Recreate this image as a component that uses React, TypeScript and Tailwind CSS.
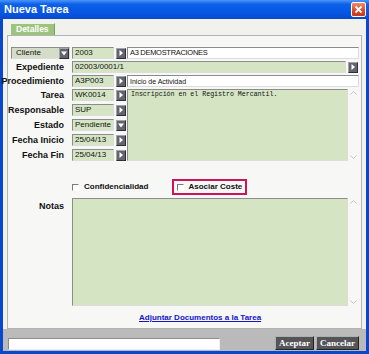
import React from "react";

// small square button with white triangle (arrow / dropdown)
function ArrowBtn({ down = false }: { down?: boolean }) {
  return (
    <div className="w-[10px] h-[11px] shrink-0 flex items-center justify-center bg-[#64646e] border border-t-[#a4a4ac] border-l-[#a4a4ac] border-b-[#2e2e34] border-r-[#2e2e34]">
      {down ? (
        <svg width="6" height="5" viewBox="0 0 6 5">
          <path d="M0 0.5h6L3 4.5z" fill="#fff" />
        </svg>
      ) : (
        <svg width="4" height="6" viewBox="0 0 4 6">
          <path d="M0.5 0v6L4 3z" fill="#fff" />
        </svg>
      )}
    </div>
  );
}

function Field({
  children,
  className = "",
}: {
  children?: React.ReactNode;
  className?: string;
}) {
  return (
    <div
      className={`h-[12px] flex items-center px-[2px] border border-t-[#8c8c8c] border-l-[#8c8c8c] border-b-[#dcdcdc] border-r-[#dcdcdc] leading-none text-[#111] overflow-hidden whitespace-nowrap ${className}`}
    >
      {children}
    </div>
  );
}

function Label({ text }: { text: string }) {
  return (
    <div className="w-[62px] shrink-0 pr-[8px] flex justify-end text-[9px] font-bold leading-none text-[#111] whitespace-nowrap">
      <span>{text}</span>
    </div>
  );
}

function Scroll({ h }: { h: string }) {
  return (
    <div className={`w-[11px] ${h} flex flex-col justify-between items-center py-[2px]`}>
      <svg width="7" height="4" viewBox="0 0 7 4">
        <path d="M0.5 3.5L3.5 0.5L6.5 3.5" stroke="#c4c4c4" fill="none" />
      </svg>
      <svg width="7" height="4" viewBox="0 0 7 4">
        <path d="M0.5 0.5L3.5 3.5L6.5 0.5" stroke="#c4c4c4" fill="none" />
      </svg>
    </div>
  );
}

function Checkbox() {
  return (
    <div className="w-[7px] h-[7px] shrink-0 bg-white border border-t-[#7a7a7a] border-l-[#7a7a7a] border-b-white border-r-white" />
  );
}

function SmallRow({ label, value, down = false }: { label: string; value: string; down?: boolean }) {
  return (
    <div className="flex items-center h-[12px]">
      <Label text={label} />
      <Field className="w-[42px] bg-[#d5e5c4] text-[8px]">{value}</Field>
      <div className="ml-[2px]">
        <ArrowBtn down={down} />
      </div>
    </div>
  );
}

export default function App() {
  return (
    <div
      className="w-[369px] h-[354px] flex flex-col bg-[#0a47cf] overflow-hidden"
      style={{ fontFamily: '"Liberation Sans", Arial, sans-serif' }}
    >
      {/* title bar */}
      <div className="h-[19px] shrink-0 flex items-center justify-between pl-[4px] pr-[3px] bg-[linear-gradient(to_bottom,#4a95f8_0%,#0c60ea_22%,#0656e2_70%,#0a48cc_100%)]">
        <span className="text-[11px] font-bold text-white leading-none">Nueva Tarea</span>
        <div className="w-[15px] h-[15px] rounded-[2px] border border-white bg-[linear-gradient(to_bottom,#f08a6a,#d9482a_60%,#c23a1c)] flex items-center justify-center">
          <svg width="9" height="9" viewBox="0 0 9 9">
            <path d="M1.5 1.5L7.5 7.5M7.5 1.5L1.5 7.5" stroke="#fff" strokeWidth="1.8" />
          </svg>
        </div>
      </div>

      {/* body */}
      <div className="flex-1 min-h-0 flex flex-col mx-[3px] mb-[3px] bg-[#f1f1ee]">
        {/* tab */}
        <div className="pt-[4px] px-[5px] flex">
          <div className="ml-[2px] h-[12px] px-[5px] flex items-center bg-[#9cc47e] border border-b-0 border-t-[#eef5e8] border-l-[#eef5e8] border-r-[#7aa060] text-[8.5px] font-bold text-white leading-none">
            Detalles
          </div>
        </div>

        {/* panel */}
        <div className="flex-1 min-h-0 mx-[4px] border border-[#b4b4b4] bg-[#f7f7f5] flex flex-col pt-[11px] pl-[2px] pr-[2px]">
          {/* row 1 */}
          <div className="flex items-center h-[12px]">
            <div className="ml-[1px] w-[59px] h-[12px] flex items-center justify-between bg-[#d5ddc9] border border-t-[#8c8c8c] border-l-[#8c8c8c] border-b-[#dcdcdc] border-r-[#dcdcdc]">
              <span className="pl-[4px] text-[8px] leading-none text-[#111]">Cliente</span>
              <ArrowBtn down />
            </div>
            <Field className="ml-[2px] w-[42px] bg-[#d5e5c4] text-[8px]">2003</Field>
            <div className="ml-[2px]">
              <ArrowBtn />
            </div>
            <Field className="ml-[1px] flex-1 bg-white text-[7.5px] tracking-[-0.3px]">A3 DEMOSTRACIONES</Field>
          </div>

          {/* row 2 */}
          <div className="flex items-center h-[12px] mt-[2px]">
            <Label text="Expediente" />
            <Field className="flex-1 bg-[#d5e5c4] text-[8px]">02003/0001/1</Field>
            <div className="ml-[2px] mr-[1px]">
              <ArrowBtn />
            </div>
          </div>

          {/* row 3 */}
          <div className="flex items-center h-[12px] mt-[2px]">
            <Label text="Procedimiento" />
            <Field className="w-[42px] bg-[#d5e5c4] text-[8px]">A3P003</Field>
            <div className="ml-[2px]">
              <ArrowBtn />
            </div>
            <Field className="ml-[1px] flex-1 bg-white text-[7px]">Inicio de Actividad</Field>
          </div>

          {/* rows 4-8 with description */}
          <div className="flex mt-[2px]">
            <div className="flex flex-col gap-[3px]">
              <SmallRow label="Tarea" value="WK0014" />
              <SmallRow label="Responsable" value="SUP" />
              <SmallRow label="Estado" value="Pendiente" down />
              <SmallRow label="Fecha Inicio" value="25/04/13" />
              <SmallRow label="Fecha Fin" value="25/04/13" />
            </div>
            <div className="ml-[1px] flex-1 flex h-[72px]">
              <div
                className="flex-1 bg-[#d5e5c4] border border-t-[#8c8c8c] border-l-[#8c8c8c] border-b-[#dcdcdc] border-r-[#dcdcdc] px-[3px] pt-[2px] text-[6.6px] leading-none text-[#111]"
                style={{ fontFamily: '"Liberation Mono", "Courier New", monospace' }}
              >
                Inscripción en el Registro Mercantil.
              </div>
              <Scroll h="h-[72px]" />
            </div>
          </div>

          {/* checkboxes */}
          <div className="flex items-center h-[16px] mt-[18px]">
            <div className="w-[62px] shrink-0" />
            <Checkbox />
            <span className="ml-[5px] text-[8px] font-bold leading-none text-[#111]">Confidencialidad</span>
            <div className="ml-[24px] h-[16px] flex items-center px-[3px] border-2 border-[#cc1458]">
              <Checkbox />
              <span className="ml-[4px] text-[8px] font-bold leading-none text-[#111]">Asociar Coste</span>
            </div>
          </div>

          {/* notas */}
          <div className="flex mt-[3px]">
            <div className="w-[62px] shrink-0 pr-[8px] pt-[4px] text-right text-[9px] font-bold leading-none text-[#111]">
              Notas
            </div>
            <div className="flex-1 flex h-[108px]">
              <div className="flex-1 bg-[#d5e5c4] border border-t-[#8c8c8c] border-l-[#8c8c8c] border-b-[#dcdcdc] border-r-[#dcdcdc]" />
              <Scroll h="h-[108px]" />
            </div>
          </div>

          {/* link */}
          <div className="mt-[8px] pl-[129px] text-[8px] leading-none">
            <span className="font-bold text-[#1515c8] underline">
              Adjuntar Documentos a la Tarea
            </span>
          </div>
        </div>

        {/* bottom bar */}
        <div className="h-[22px] shrink-0 flex items-end pb-[1px] bg-[#bababa]">
          <div className="ml-[5px] w-[212px] h-[12px] bg-white border border-t-[#8c8c8c] border-l-[#8c8c8c] border-b-[#eeeeee] border-r-[#eeeeee]" />
          <div className="ml-auto mr-[7px] flex gap-[2px]">
            {["Aceptar", "Cancelar"].map((t) => (
              <div
                key={t}
                className="h-[14px] px-[3px] flex items-center bg-[#555558] border border-t-[#b0b0b0] border-l-[#b0b0b0] border-b-[#222] border-r-[#222] text-[9px] font-bold text-white leading-none"
                style={{ fontFamily: '"Liberation Serif", "Times New Roman", serif' }}
              >
                {t}
              </div>
            ))}
          </div>
        </div>
      </div>
    </div>
  );
}
